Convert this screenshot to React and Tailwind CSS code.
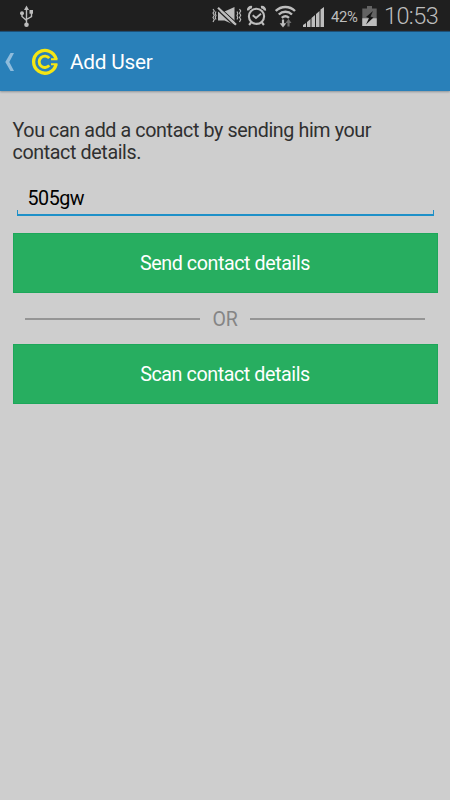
function UsbIcon() {
  return (
    <svg className="ml-5 h-[31px] w-[14px]" viewBox="0 0 14 31" fill="none" stroke="#bdbdbd" strokeWidth="1.4">
      <path d="M6.5 9V24M2 14v2.5L6.5 20.5M11.5 12.5v4L6.5 19.5" />
      <path d="M6.5 5.5 9 10H4z" fill="#bdbdbd" stroke="none" />
      <circle cx="2" cy="13.3" r="2" fill="#bdbdbd" stroke="none" />
      <path d="M9.5 10h3.5v3.7H9.5z" fill="#bdbdbd" stroke="none" />
      <circle cx="6.5" cy="24.8" r="2.3" fill="#bdbdbd" stroke="none" />
    </svg>
  );
}

function MuteIcon() {
  return (
    <svg className="h-[31px] w-[30px]" viewBox="0 0 30 31" fill="none">
      <path d="M6 11.5h6.5L22.5 7v18l-10-4.5H6z" fill="#bdbdbd" />
      <path d="M7.5 7.3 25 23.3" stroke="#1f1f1f" strokeWidth="1.1" />
      <path d="M6 7.8 24 24.8" stroke="#bdbdbd" strokeWidth="2.2" />
      <path d="M4.5 9 22 25.500" stroke="#1f1f1f" strokeWidth="1.1" />
      <path d="M1 9l1.3 2L1 13l1.3 2.2L1 17.5l1.3 2L1 22M4 11.5l-.8 2 .8 2-.8 2 .8 2" stroke="#bdbdbd" strokeWidth="1.1" />
      <path d="M27.500 9l1.2 2-1.2 2 1.2 2.2-1.2 2.3 1.2 2-1.2 2.500M25 11.5l.8 2-.8 2 .8 2-.8 2" stroke="#bdbdbd" strokeWidth="1.1" />
    </svg>
  );
}

function AlarmIcon() {
  return (
    <svg className="ml-[5px] h-[31px] w-5" viewBox="0 0 20 31" fill="none" stroke="#bdbdbd" strokeWidth="2.1">
      <circle cx="9.5" cy="16.3" r="7.6" />
      <path d="M5.7 15.2 9 18l5-4.2" strokeWidth="1.8" />
      <path d="M1.2 10.5C1 8.5 2.5 6.8 5 7.2M17.8 10.5C18 8.5 16.5 6.8 14 7.2" strokeWidth="2.6" />
      <path d="M4.3 22.2 2.1 25M14.7 22.2l2.2 2.8" />
    </svg>
  );
}

function WifiIcon() {
  return (
    <svg className="ml-2 h-[31px] w-[22px]" viewBox="0 0 22 31" fill="none" stroke="#bdbdbd" strokeWidth="2.4">
      <path d="M.8 11C6 5.7 14.7 5.7 20 11M3.8 14.5c3.8-3.6 9.4-3.6 13.2 0M6.8 17.8c2.2-2 5-2 7.2 0" />
      <path d="M8 19.5v6" strokeWidth="2.2" />
      <path d="M4.7 23.3h6.6L8 27.6z" fill="#bdbdbd" stroke="none" />
      <path d="M13.5 26.5v-5" stroke="#6e6e6e" strokeWidth="2.2" />
      <path d="M10.5 23h6l-3-4.2z" fill="#6e6e6e" stroke="none" />
    </svg>
  );
}

function SignalIcon() {
  return (
    <svg className="ml-1.5 h-[31px] w-[22px]" viewBox="0 0 22 31" fill="#bdbdbd">
      <path d="M0 27v-2l3-2v4zM4 27v-5l3.5-3v8zM8.5 27v-9l3.5-3v12zM13 27V14l3.5-3v16zM17.500 27V9.500L21 7v20z" />
    </svg>
  );
}

function BatteryIcon() {
  return (
    <svg className="h-[31px] w-4" viewBox="0 0 16 31">
      <path d="M5 6h5v2.5h4.7V26H.3V8.5H5z" fill="#636363" />
      <path d="M.3 18.3h14.4V26H.3z" fill="#bdbdbd" />
      <path d="M11 11 4 17l3 1-3 6.5 7.5-7-3-1z" fill="#161616" />
    </svg>
  );
}

function StatusBar() {
  return (
    <div className="flex h-[31px] items-center bg-[#1f1f1f] text-[#bdbdbd]">
      <UsbIcon />
      <div className="ml-auto flex items-center">
        <MuteIcon />
        <AlarmIcon />
        <WifiIcon />
        <SignalIcon />
        <span className="ml-1.5 w-[31px] pt-[3px] text-[14.8px] leading-5 tracking-[-0.3px]">42%</span>
        <BatteryIcon />
        <span className="ml-1.5 w-[66px] pt-px text-[23.5px] leading-7 font-light tracking-[-0.6px]">10:53</span>
      </div>
    </div>
  );
}

function Logo() {
  return (
    <svg className="ml-4 size-7" viewBox="0 0 28 28" fill="none" stroke="#f5e614">
      <path d="M25.100 11.200A11.400 11.400 0 1 0 25.100 16.400" strokeWidth="3.300" />
      <path d="M20 11.300h6.500M20 16.300h6.500" strokeWidth="2" />
      <path d="M18.300 10.200A5.700 5.700 0 1 0 18.300 17.400" strokeWidth="2.900" />
    </svg>
  );
}

function Header() {
  return (
    <header className="flex h-[60px] items-center border-t border-[#1d5077] bg-[#2980b9] text-white shadow-[0_1px_2px_#8d9499]">
      <svg className="ml-[5px] h-5 w-[10px]" viewBox="0 0 10 20" fill="#8fbcdc">
        <path d="M5.5 1H9L4.3 10 9 19H5.5L.3 10z" />
      </svg>
      <Logo />
      <h1 className="ml-[11px] pt-0.5 text-[20.8px] tracking-[-0.25px]">Add User</h1>
    </header>
  );
}

function ActionButton({ children }) {
  return (
    <button className="h-[60px] w-full border border-[#1da75a] bg-[#27ae60] pt-px text-[19.7px] tracking-[-0.42px] text-white">
      {children}
    </button>
  );
}

export default function App() {
  return (
    <div className="flex h-[800px] w-[450px] flex-col bg-[#cecece] font-[Roboto,sans-serif]">
      <StatusBar />
      <Header />
      <main className="px-[12.5px] pt-[29px]">
        <p className="max-w-[380px] text-[19.7px] leading-[22px] tracking-[-0.39px] text-[#303030]">
          You can add a contact by sending him your contact details.
        </p>
        <div className="mx-1 mt-[21px] h-[31px]">
          <div className="h-[25px] pt-px pl-[11px] text-[19.7px] leading-[25px] tracking-[-0.5px] text-black">505gw</div>
          <div className="h-1.5 border-x border-b-2 border-[#1e90c8]" />
        </div>
        <div className="mt-[17px]">
          <ActionButton>Send contact details</ActionButton>
        </div>
        <div className="flex h-[51px] items-center gap-[12.5px] px-[12.5px] text-[#858585]">
          <div className="h-0.5 flex-1 bg-[#959595]" />
          <span className="pt-0.5 text-[19.5px] tracking-[-0.3px]">OR</span>
          <div className="h-0.5 flex-1 bg-[#959595]" />
        </div>
        <ActionButton>Scan contact details</ActionButton>
      </main>
    </div>
  );
}
